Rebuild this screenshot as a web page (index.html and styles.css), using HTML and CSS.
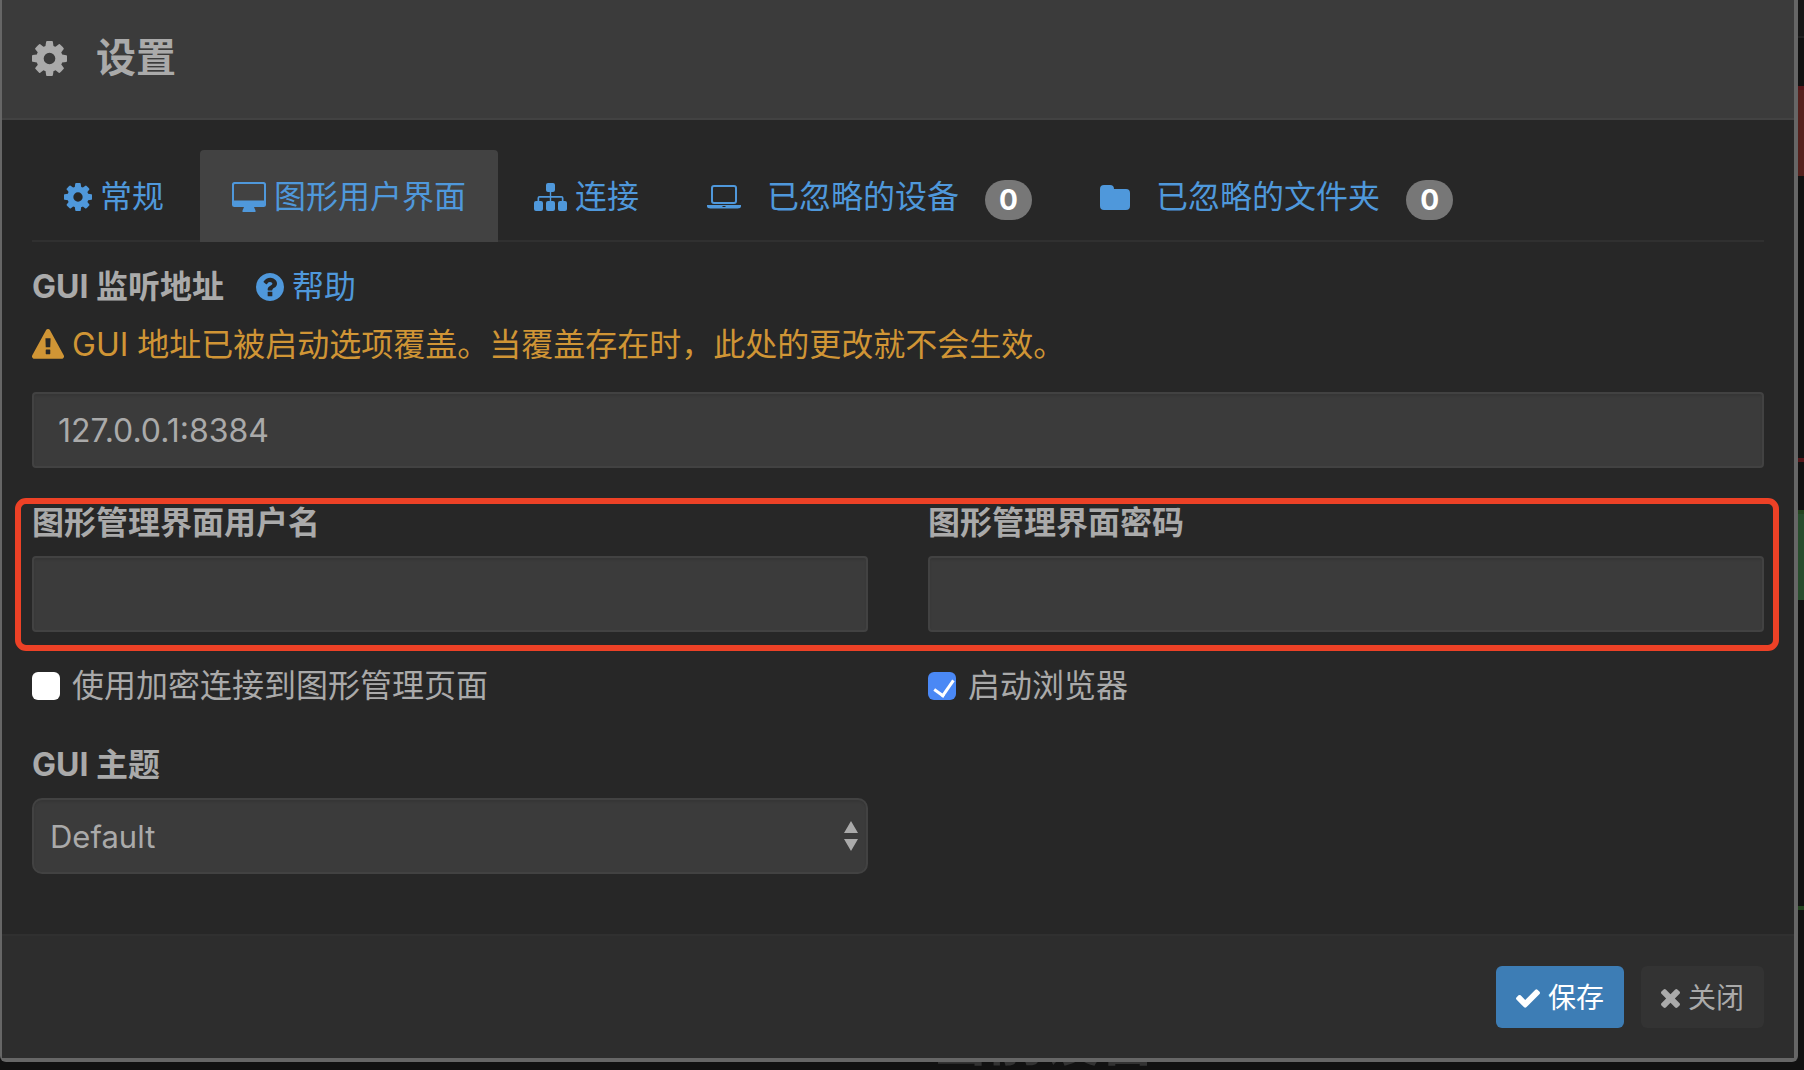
FILE: index.html
```html
<!DOCTYPE html>
<html lang="zh-CN">
<head>
    <meta charset="UTF-8">
    <meta name="viewport" content="width=device-width, initial-scale=1.0">
    <title>设置</title>
    <link rel="stylesheet" href="styles.css">
</head>
<body>
    <!-- Icons used more than once -->
    <svg class="sprite" aria-hidden="true">
        <symbol id="cog" viewBox="128 128 1536 1536"><path d="M1152 896q0-106-75-181t-181-75-181 75-75 181 75 181 181 75 181-75 75-181zm512-109v222q0 12-8 23t-20 13l-185 28q-19 54-39 91 35 50 107 138 10 12 10 25t-9 23q-27 37-99 108t-94 71q-12 0-26-9l-138-108q-44 23-91 38-16 136-29 186-7 28-36 28h-222q-14 0-24.5-8.5t-11.5-21.5l-28-184q-49-16-90-37l-141 107q-10 9-25 9-14 0-25-11-126-114-165-168-7-10-7-23 0-12 8-23 15-21 51-66.5t54-70.5q-27-50-41-99l-183-27q-13-2-21-12.5t-8-23.5v-222q0-12 8-23t19-13l186-28q14-46 39-92-40-57-107-138-10-12-10-24 0-10 9-23 26-36 98.5-107.5t94.5-71.5q13 0 26 10l138 107q44-23 91-38 16-136 29-186 7-28 36-28h222q14 0 24.5 8.5t11.5 21.5l28 184q49 16 90 37l142-107q9-9 24-9 13 0 25 10 129 119 165 170 7 8 7 22 0 12-8 23-15 21-51 66.5t-54 70.5q26 50 41 98l183 28q13 2 21 12.5t8 23.5z"/></symbol>
    </svg>

    <!-- Dimmed page behind the dialog -->
    <div class="backdrop" aria-hidden="true">
        <div class="navbar"></div>
        <div class="panel panel-danger"></div>
        <div class="panel panel-success"></div>
        <h3 class="backdrop-title">当前设备</h3>
    </div>

    <div class="modal" role="dialog" aria-labelledby="modalTitle">
        <div class="modal-header">
            <svg class="icon icon-title"><use href="#cog"/></svg>
            <h4 id="modalTitle">设置</h4>
        </div>

        <form class="modal-body" id="settings">
            <!-- Tabs -->
            <nav class="tabs">
                <a href="#general" class="tab">
                    <svg class="icon icon-cog"><use href="#cog"/></svg>
                    <span>常规</span>
                </a>
                <a href="#gui" class="tab active">
                    <svg class="icon icon-desktop" viewBox="0 0 34 30"><path fill-rule="evenodd" d="M2.500 0h29a2.500 2.500 0 0 1 2.500 2.500v20a2.500 2.500 0 0 1-2.500 2.500H22l1.500 3.500v1.500h-13v-1.500L12 25H2.500A2.500 2.500 0 0 1 0 22.500v-20A2.500 2.500 0 0 1 2.500 0zM2 3v15.500h30V3a1 1 0 0 0-1-1H3a1 1 0 0 0-1 1z"/></svg>
                    <span>图形用户界面</span>
                </a>
                <a href="#connections" class="tab">
                    <svg class="icon icon-sitemap" viewBox="0 0 33 28"><path d="M14 0h5a2 2 0 0 1 2 2v5a2 2 0 0 1-2 2h-1.800v4h10.300a2 2 0 0 1 2 2v3H31a2 2 0 0 1 2 2v6a2 2 0 0 1-2 2h-5a2 2 0 0 1-2-2v-6a2 2 0 0 1 2-2h1.800v-3.300H17.200V18H19a2 2 0 0 1 2 2v6a2 2 0 0 1-2 2h-5a2 2 0 0 1-2-2v-6a2 2 0 0 1 2-2h1.800v-3.300H5.200V18H7a2 2 0 0 1 2 2v6a2 2 0 0 1-2 2H2a2 2 0 0 1-2-2v-6a2 2 0 0 1 2-2h1.500v-3a2 2 0 0 1 2-2h10.300V9H14a2 2 0 0 1-2-2V2a2 2 0 0 1 2-2z"/></svg>
                    <span>连接</span>
                </a>
                <a href="#ignored-devices" class="tab tab-wide">
                    <svg class="icon icon-laptop" viewBox="0 0 34 24"><path fill-rule="evenodd" d="M7 0h20a3 3 0 0 1 3 3v13a3 3 0 0 1-3 3H7a3 3 0 0 1-3-3V3a3 3 0 0 1 3-3zm0 2a1 1 0 0 0-1 1v13a1 1 0 0 0 1 1h20a1 1 0 0 0 1-1V3a1 1 0 0 0-1-1zM0 20h34v1.500c0 1-1.500 2-3.500 2h-27C1.500 23.500 0 22.500 0 21.500zm15.500 1v1h3v-1z"/></svg>
                    <span>已忽略的设备</span>
                    <span class="badge">0</span>
                </a>
                <a href="#ignored-folders" class="tab tab-wide">
                    <svg class="icon icon-folder" viewBox="0 0 30 25"><path d="M4 0h6a4 4 0 0 1 4 4h12a4 4 0 0 1 4 4v13a4 4 0 0 1-4 4H4a4 4 0 0 1-4-4V4a4 4 0 0 1 4-4z"/></svg>
                    <span>已忽略的文件夹</span>
                    <span class="badge">0</span>
                </a>
            </nav>

            <!-- Listen address -->
            <div class="label-row">
                <label for="address">GUI 监听地址</label>
                <a href="#help" class="help">
                    <svg class="icon icon-help" viewBox="128 128 1536 1536"><path d="M1024 1376v-192q0-14-9-23t-23-9h-192q-14 0-23 9t-9 23v192q0 14 9 23t23 9h192q14 0 23-9t9-23zm256-672q0-88-55.500-163t-138.500-116-170-41q-243 0-371 213-15 24 8 42l132 100q7 6 19 6 16 0 25-12 53-68 86-92 34-24 86-24 48 0 85.500 26t37.500 59q0 38-20 61t-68 45q-63 28-115.500 86.500t-52.500 125.500v36q0 14 9 23t23 9h192q14 0 23-9t9-23q0-19 21.500-49.500t54.500-49.500q32-18 49-28.500t46-35 44.500-48 28-60.500 12.500-81zm384 192q0 209-103 385.500t-279.500 279.500-385.500 103-385.500-103-279.500-279.500-103-385.500 103-385.500 279.500-279.500 385.500-103 385.500 103 279.500 279.500 103 385.500z"/></svg>
                    <span>帮助</span>
                </a>
            </div>
            <p class="warning">
                <svg class="icon icon-warning" viewBox="0 0 1792 1792"><path d="M1024 1375v-190q0-14-9.500-23.500t-22.500-9.500h-192q-13 0-22.500 9.500t-9.500 23.500v190q0 14 9.500 23.500t22.500 9.500h192q13 0 22.500-9.500t9.500-23.500zm-2-374l18-459q0-12-10-19-13-11-24-11h-220q-11 0-24 11-10 7-10 21l17 457q0 10 10 16.500t24 6.500h185q14 0 23.500-6.500t10.500-16.500zm-14-934l768 1408q35 63-2 126-17 29-46.500 46t-63.500 17h-1536q-34 0-63.500-17t-46.500-46q-37-63-2-126l768-1408q17-31 47-49t65-18 65 18 47 49z"/></svg>
                <span>GUI 地址已被启动选项覆盖。当覆盖存在时，此处的更改就不会生效。</span>
            </p>
            <input type="text" id="address" class="form-control" value="127.0.0.1:8384">

            <!-- User name and password -->
            <div class="row credentials">
                <div class="col">
                    <label for="user">图形管理界面用户名</label>
                    <input type="text" id="user" class="form-control">
                </div>
                <div class="col">
                    <label for="password">图形管理界面密码</label>
                    <input type="password" id="password" class="form-control">
                </div>
            </div>

            <div class="row checks">
                <div class="check">
                    <input type="checkbox" id="useTLS">
                    <label for="useTLS">使用加密连接到图形管理页面</label>
                </div>
                <div class="check">
                    <input type="checkbox" id="startBrowser" checked>
                    <label for="startBrowser">启动浏览器</label>
                </div>
            </div>

            <!-- Theme -->
            <div class="row theme">
                <div class="col">
                    <label for="theme">GUI 主题</label>
                    <div class="select-wrap">
                        <select id="theme" class="form-control">
                            <option>Default</option>
                        </select>
                        <svg class="select-arrows" viewBox="0 0 14 30"><path d="M7 0l7 12H0zM0 18h14L7 30z"/></svg>
                    </div>
                </div>
            </div>
        </form>

        <div class="modal-footer">
            <button type="submit" form="settings" class="btn btn-primary">
                <svg class="icon icon-check" viewBox="121 334 1550 1188"><path d="M1671 566q0 40-28 68l-724 724-136 136q-28 28-68 28t-68-28l-136-136-362-362q-28-28-28-68t28-68l136-136q28-28 68-28t68 28l294 295 656-657q28-28 68-28t68 28l136 136q28 28 28 68z"/></svg>
                <span>保存</span>
            </button>
            <button type="button" class="btn btn-default">
                <svg class="icon icon-times" viewBox="302 366 1188 1188"><path d="M1490 1322q0 40-28 68l-136 136q-28 28-68 28t-68-28l-294-294-294 294q-28 28-68 28t-68-28l-136-136q-28-28-28-68t28-68l294-294-294-294q-28-28-28-68t28-68l136-136q28-28 68-28t68 28l294 294 294-294q28-28 68-28t68 28l136 136q28 28 28 68t-28 68l-294 294 294 294q28 28 28 68z"/></svg>
                <span>关闭</span>
            </button>
        </div>
    </div>
</body>
</html>
```
FILE: styles.css
```css
* {
    box-sizing: border-box;
}
body {
    margin: 0;
    background-color: #111;
    color: #aaa;
    font-family: Inter, "Noto Sans CJK SC", sans-serif;
    font-size: 32px;
    line-height: 46px;
    overflow: hidden;
}
h3, h4, p {
    margin: 0;
}
a {
    color: #4f98db;
    text-decoration: none;
}
label {
    font-weight: bold;
}
.sprite {
    display: none;
}
.icon {
    flex: none;
    fill: currentColor;
}

/* Page behind the dialog */
.backdrop {
    position: fixed;
    inset: 0;
    overflow: hidden;
}
.navbar {
    height: 38px;
    background-color: #161616;
    border-bottom: 2px solid #202020;
}
.panel {
    margin-top: 48px;
    border-style: solid;
    border-width: 4px 0;
}
.panel-danger {
    height: 376px;
    background: linear-gradient(#55211d 86px, #111 86px);
    border-color: #561619;
}
.panel-success {
    height: 400px;
    background: linear-gradient(#284d2d 86px, #111 86px);
    border-color: #24441f;
}
.backdrop-title {
    margin-top: 90px;
    padding-left: 932px;
    color: #333;
    font-size: 56px;
    line-height: 80px;
}

/* Dialog */
.modal {
    position: relative;
    margin-right: 6px;
    background-color: #272727;
    border: solid #666;
    border-width: 0 4px 4px 2px;
    border-radius: 0 0 6px 6px;
}
.modal-header {
    display: flex;
    align-items: center;
    gap: 29px;
    height: 120px;
    padding: 0 30px 2px;
    background-color: #3b3b3b;
    border-bottom: 2px solid #424242;
}
.modal-header h4 {
    font-size: 40px;
    line-height: 56px;
    font-weight: bold;
}
.modal-body {
    padding: 30px 30px 60px;
}

/* Tabs */
.tabs {
    display: flex;
    gap: 4px;
    margin-bottom: 22px;
    box-shadow: inset 0 -2px #303030;
}
.tab {
    display: flex;
    align-items: center;
    gap: 8px;
    height: 92px;
    padding: 2px 32px 0;
    border-radius: 4px 4px 0 0;
}
.tab.active {
    background-color: #424242;
}
.tab-wide {
    gap: 26px;
}
.badge {
    min-width: 47px;
    height: 40px;
    margin-top: 6px;
    border-radius: 20px;
    background-color: #777;
    color: #fff;
    font-size: 28px;
    font-weight: bold;
    line-height: 40px;
    text-align: center;
}

/* Form */
.label-row {
    display: flex;
    gap: 32px;
}
.help, .warning, .check {
    display: flex;
    align-items: center;
    gap: 8px;
}
.warning {
    margin: 12px 0 24px;
    color: #d09535;
}
.form-control {
    display: block;
    width: 100%;
    height: 76px;
    padding: 0 24px;
    border: 2px solid #424242;
    border-radius: 4px;
    background-color: #3b3b3b;
    box-shadow: inset 0 2px 2px rgba(0, 0, 0, 0.08);
    color: #aaa;
    font: inherit;
}
.row {
    display: grid;
    grid-template-columns: 1fr 1fr;
    column-gap: 60px;
}
.col label {
    display: block;
    margin-bottom: 10px;
}
.credentials {
    position: relative;
    margin-top: 32px;
}
/* Highlight around the two fields */
.credentials::after {
    content: "";
    position: absolute;
    inset: -2px -15px -19px -17px;
    border: 6px solid #ed4126;
    border-radius: 11px;
    pointer-events: none;
}
.checks {
    margin: 31px 0 33px;
}
.check {
    gap: 12px;
}
.check label {
    font-weight: normal;
}
.check input {
    appearance: none;
    position: relative;
    width: 28px;
    height: 28px;
    margin: 0;
    border-radius: 6px;
    background-color: #fff;
}
.check input:checked {
    background-color: #4a88f5;
}
.check input:checked::after {
    content: "";
    position: absolute;
    left: 10px;
    top: 4px;
    width: 9px;
    height: 17px;
    border: solid #fff;
    border-width: 0 3px 3px 0;
    transform: rotate(35deg);
}
.select-wrap {
    position: relative;
}
.select-wrap select {
    appearance: none;
    padding: 2px 16px 0;
    border-radius: 10px;
    font-size: 31px;
}
.select-arrows {
    position: absolute;
    top: 23px;
    right: 10px;
    width: 14px;
    height: 30px;
    fill: #aaa;
    pointer-events: none;
}

/* Footer */
.modal-footer {
    display: flex;
    justify-content: flex-end;
    gap: 17px;
    padding: 30px;
    background-color: #2d2d2d;
    border-top: 2px solid #303030;
}
.btn {
    display: flex;
    align-items: center;
    gap: 8px;
    height: 62px;
    padding: 2px 20px 0;
    border: 0;
    border-radius: 6px;
    font: inherit;
    font-size: 28px;
    cursor: pointer;
}
.btn-primary {
    background-color: #3d7db5;
    color: #fff;
}
.btn-default {
    background-color: #333;
    color: #aaa;
}

/* Icon sizes */
.icon-title {
    width: 35px;
    height: 35px;
}
.icon-cog, .icon-help {
    width: 28px;
    height: 28px;
}
.icon-desktop {
    width: 34px;
    height: 30px;
}
.icon-sitemap {
    width: 33px;
    height: 28px;
}
.icon-laptop {
    width: 34px;
    height: 24px;
}
.icon-folder {
    width: 30px;
    height: 25px;
}
.icon-warning {
    width: 32px;
    height: 32px;
}
.icon-check {
    width: 24px;
    height: 19px;
}
.icon-times {
    width: 19px;
    height: 19px;
}
```
